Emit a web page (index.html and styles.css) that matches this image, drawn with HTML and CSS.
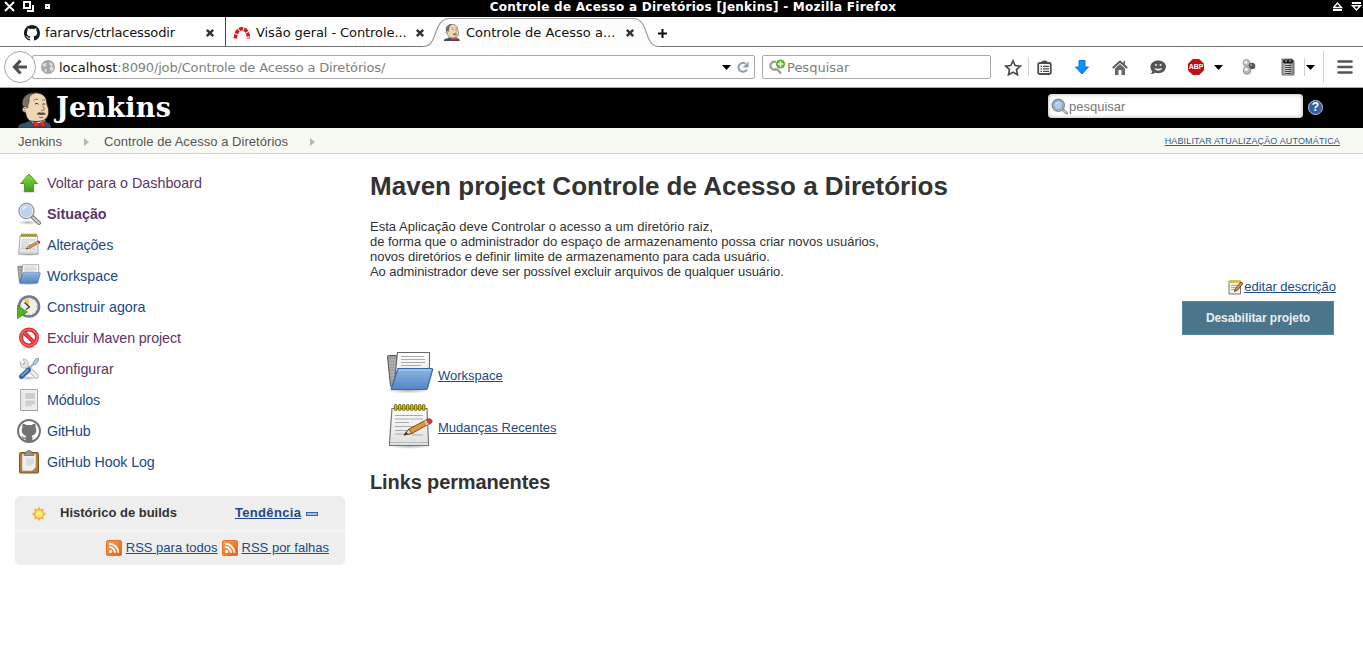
FILE: index.html
```
<!DOCTYPE html>
<html lang="pt-BR">
<head>
<meta charset="utf-8">
<title>Controle de Acesso a Diretórios [Jenkins]</title>
<link rel="stylesheet" href="styles.css">
</head>
<body>
<svg class="defs" width="0" height="0" aria-hidden="true">
  <defs>
    <linearGradient id="gFolder" x1="0" y1="0" x2="0" y2="1"><stop offset="0" stop-color="#8db5e2"/><stop offset="1" stop-color="#5487c4"/></linearGradient>
    <linearGradient id="gPaper" x1="0" y1="0" x2="0" y2="1"><stop offset="0" stop-color="#ffffff"/><stop offset="1" stop-color="#dedede"/></linearGradient>
    <linearGradient id="gGreen" x1="0" y1="0" x2="0" y2="1"><stop offset="0" stop-color="#8fdc4c"/><stop offset="1" stop-color="#3f9c10"/></linearGradient>
    <linearGradient id="gRss" x1="0" y1="0" x2="1" y2="1"><stop offset="0" stop-color="#f5a058"/><stop offset=".5" stop-color="#f08030"/><stop offset="1" stop-color="#d9621c"/></linearGradient>
    <linearGradient id="gBin" x1="0" y1="0" x2="1" y2="0"><stop offset="0" stop-color="#888"/><stop offset=".4" stop-color="#d8d8d8"/><stop offset="1" stop-color="#777"/></linearGradient>
    <radialGradient id="gSun"><stop offset="0" stop-color="#fff6a0"/><stop offset="1" stop-color="#fcd73c"/></radialGradient>
    <radialGradient id="gShade"><stop offset="0" stop-color="#000" stop-opacity=".3"/><stop offset="1" stop-color="#000" stop-opacity="0"/></radialGradient>
  </defs>
  <symbol id="close" viewBox="0 0 10 10"><path d="M1.800 1.800 8.200 8.200M8.200 1.800 1.800 8.200" stroke="#333" stroke-width="2.400"/></symbol>
  <symbol id="caret" viewBox="0 0 9 5"><path d="M0 0h9L4.500 5z" fill="#000"/></symbol>
  <symbol id="octocat" viewBox="0 0 16 16"><path fill="#1b1b1b" d="M8 0C3.58 0 0 3.58 0 8c0 3.54 2.29 6.53 5.47 7.59.4.07.55-.17.55-.38 0-.19-.01-.82-.01-1.49-2.01.37-2.53-.49-2.69-.94-.09-.23-.48-.94-.82-1.13-.28-.15-.68-.52-.01-.53.63-.01 1.08.58 1.23.82.72 1.21 1.87.87 2.33.66.07-.52.28-.87.51-1.07-1.78-.2-3.64-.89-3.64-3.95 0-.87.31-1.59.82-2.15-.08-.2-.36-1.02.08-2.12 0 0 .67-.21 2.2.82.64-.18 1.32-.27 2-.27s1.36.09 2 .27c1.53-1.04 2.2-.82 2.2-.82.44 1.1.16 1.92.08 2.12.51.56.82 1.27.82 2.15 0 3.07-1.87 3.75-3.65 3.95.29.25.54.73.54 1.48 0 1.07-.01 1.93-.01 2.2 0 .21.15.46.55.38A8.01 8.01 0 0 0 16 8c0-4.42-3.58-8-8-8z"/></symbol>
  <symbol id="butler" viewBox="0 0 34 36">
    <path d="M0 36c0-3.500 3-4.500 7-5l5-2.500 9 4 7-2.500c3 .5 4.500 2 5 6z" fill="#34566b" stroke="#1a2c38" stroke-width=".6"/>
    <path d="M12.500 28.500l6 6 9-5-1-3z" fill="#f2f2f2"/>
    <path d="M12 29C8.500 26.500 8 23 7.500 20.500 3.500 20.500 3.500 15.500 6 15 5 8 9 1 17 .8c7-.2 11 3.700 11.600 8.200.3 2 .2 3.500 1.200 5.500 1 2.500 1.200 5 .7 7.500-.8 4-3.500 6.700-8 7.200-3.500.4-7.500.3-10.500-.2z" fill="#efd6b4" stroke="#2a221c" stroke-width=".9"/>
    <path d="M5.500 15.200C2.500 10 5.500 3.500 11 1.700c2-.8 4-.9 6-.7-3.500 1-5.500 3-6 5.500.8 3-1 5-1.500 9.500l-2-1.500z" fill="#77706b" stroke="#2b2622" stroke-width=".5"/>
    <path d="M8.500 16.500q-2.500-.8-2.500 1t2 2" fill="none" stroke="#8a6d52" stroke-width=".7"/>
    <path d="M15.500 8.500c1-1.500 3-1.800 4.500-.8M24 8.500c1-.8 2-.8 3 0" fill="none" stroke="#5f4d3d" stroke-width=".8"/>
    <path d="M17 12q2-1.500 3.500.3M24.500 12.300q1.500-1 2.700 0" fill="none" stroke="#3a3029" stroke-width="1"/>
    <path d="M24.500 13.500q2.500 3.500 1.500 4.500-1.500 1-3 .2" fill="none" stroke="#7a5b40" stroke-width=".8"/>
    <path d="M18.500 22.300c2-2.800 3.700-2.300 5.200-1.600 1.500-.6 3.200-.2 4.300 1.600-2.500.9-6 .9-9.500 0z" fill="#57483e"/>
    <path d="M21 25q2 1.200 4.300.2" fill="none" stroke="#8d4a35" stroke-width=".9"/>
    <path d="M15.500 29.500l5.500 2 5.500-2.500L27.500 35l-5.500-1.200-6 2z" fill="#dd322c" stroke="#7d1712" stroke-width=".6"/><circle cx="21.500" cy="32.500" r="1.600" fill="#b51f1b"/>
  </symbol>
  <symbol id="magnifier" viewBox="0 0 24 24">
    <ellipse cx="11" cy="20.500" rx="10" ry="2.500" fill="url(#gShade)"/>
    <path d="M15 14.500l7 6.500" stroke="#777" stroke-width="4" stroke-linecap="round"/><path d="M16 15.500l6 5.500" stroke="#cfcfcf" stroke-width="2" stroke-linecap="round"/>
    <circle cx="9.500" cy="9" r="7" fill="#b9d3ee" stroke="#8b9499" stroke-width="2.400"/><circle cx="9.500" cy="9" r="6.300" fill="none" stroke="#e7edf3" stroke-width="1.300"/><path d="M5 9c0-4 4-6 7-4-3 0-5 2-7 4z" fill="#e8f3ff"/>
  </symbol>
  <symbol id="lens" viewBox="0 0 17 17">
    <path d="M11 11l4.500 4" stroke="#888" stroke-width="3" stroke-linecap="round"/><path d="M12 12l3.500 3" stroke="#ccc" stroke-width="1.300"/>
    <circle cx="7.300" cy="7.200" r="6" fill="#fff" stroke="#8a8d88" stroke-width="1.500"/><circle cx="7.300" cy="7.200" r="4.600" fill="#a9ccf2" stroke="#5b86b8" stroke-width=".9"/><path d="M4.500 7c0-2.500 2.500-3.500 4.500-2.500-2 0-3.500 1.200-4.500 2.500z" fill="#e8f3ff"/>
  </symbol>
  <symbol id="notepad" viewBox="0 0 48 48">
    <ellipse cx="24" cy="43" rx="22" ry="3" fill="url(#gShade)"/>
    <path d="M6 5.500h35l1.500 34v3h-39v-3z" fill="url(#gPaper)" stroke="#777" stroke-width="1.200"/><path d="M4 39.500h38" stroke="#bbb"/>
    <path d="M9 12.500h28M9 16h28M9 19.500h14M9 23.500h24M9 27.500h18M9 31h12M26 32h11" stroke="#aaa" stroke-width="1"/>
    <g fill="#dbc51c" stroke="#645a05" stroke-width=".9"><rect x="8.300" y="1.500" width="2.700" height="6" rx="1.300"/><rect x="12.300" y="1.500" width="2.700" height="6" rx="1.300"/><rect x="16.300" y="1.500" width="2.700" height="6" rx="1.300"/><rect x="20.300" y="1.500" width="2.700" height="6" rx="1.300"/><rect x="24.300" y="1.500" width="2.700" height="6" rx="1.300"/><rect x="28.300" y="1.500" width="2.700" height="6" rx="1.300"/><rect x="32.300" y="1.500" width="2.700" height="6" rx="1.300"/><rect x="36.300" y="1.500" width="2.700" height="6" rx="1.300"/></g>
    <path d="M18 32l5-6 18-9.500 2.500 4L26 30.500z" fill="#d9973c" stroke="#78501a" stroke-width="1"/><path d="M18 32l5-6 2.500 4.500z" fill="#f0d9ae" stroke="#5b4320" stroke-width=".8"/><path d="M18 32l2.500-3 1.200 2z" fill="#222"/>
    <path d="M40 17l2-1c2-1 5 1 4 3.500l-3 2z" fill="#dc3838" stroke="#8a1d1d" stroke-width=".6"/><path d="M38.300 17.900l2.400 4.300 2-1-2.500-4.300z" fill="#ccc"/>
  </symbol>
  <symbol id="folder" viewBox="0 0 48 48">
    <ellipse cx="22" cy="39.500" rx="22" ry="3" fill="url(#gShade)"/>
    <path d="M1.500 5.500q0-1 1-1h8l4 29-7 4q-3-1-3.200-4z" fill="#9c9c9c" stroke="#555"/><path d="M3 9h9M3 12h9M3 15h9M4 18h9M4 21h9M4 24h9M5 27h9" stroke="#c9c9c9" stroke-width=".8"/>
    <path d="M11.500 1.500h32v14l-3 10H16L8 35z" fill="url(#gPaper)" stroke="#666" stroke-width="1.100"/><path d="M15 5.500h23M15 8.500h24M15 11.500h24M15 14.500h20" stroke="#aaa"/>
    <path d="M12 17.500h33.500q1.500 0 1 1.500l-5 18q-.5 1.500-2 1.500H6.500q-2 0-1-1.500z" fill="url(#gFolder)" stroke="#3567a5" stroke-width="1.200"/><path d="M12.700 19h32.300" stroke="#b8d4f2" stroke-width=".8"/>
  </symbol>
  <symbol id="rss" viewBox="0 0 16 16"><rect width="16" height="16" rx="2.500" fill="url(#gRss)"/><rect x=".5" y=".5" width="15" height="15" rx="2" fill="none" stroke="#e37328" /><circle cx="4.600" cy="11.400" r="1.600" fill="#fff"/><path d="M3.200 7a5.800 5.800 0 0 1 5.800 5.800M3.200 3.700a9.100 9.100 0 0 1 9.100 9.100" fill="none" stroke="#fff" stroke-width="2"/></symbol>
</svg>

<header class="titlebar">
  <svg class="wm-left" width="56" height="13" viewBox="0 0 56 13"><path d="M5 2l9 9M14 2l-9 9" stroke="#fff" stroke-width="2"/><path d="M24 2h6v6h-6z" fill="none" stroke="#fff" stroke-width="2"/><path d="M33 5v6h-6" fill="none" stroke="#fff" stroke-width="2"/><path d="M46 5h3v3h-3z" fill="none" stroke="#fff" stroke-width="2"/></svg>
  <span class="wm-title">Controle de Acesso a Diretórios [Jenkins] - Mozilla Firefox</span>
  <svg class="wm-right" width="30" height="13" viewBox="0 0 30 13"><path d="M.5 7.500h8L4.500 3z" fill="none" stroke="#fff" stroke-width="1.400"/><path d="M0 10h9M19 3h9" stroke="#fff" stroke-width="2"/><path d="M19.500 5.700h8l-4 4.200z" fill="none" stroke="#fff" stroke-width="1.400"/></svg>
</header>

<nav class="tabs">
  <div class="tab tab-first">
    <svg width="16" height="16"><use href="#octocat"/></svg>
    <span class="tab-label">fararvs/ctrlacessodir</span>
    <svg width="10" height="10"><use href="#close"/></svg>
  </div>
  <div class="tab tab-second">
    <svg width="18" height="16" viewBox="0 0 18 16"><path d="M2.500 13.500C2.500.5 15.500.5 15.500 13.500" fill="none" stroke="#d51a1e" stroke-width="3.600" stroke-dasharray="4 1"/></svg>
    <span class="tab-label">Visão geral - Controle...</span>
    <svg width="10" height="10"><use href="#close"/></svg>
  </div>
  <div class="tab tab-active">
    <svg class="tab-shape" width="238" height="30" viewBox="0 0 238 30"><path d="M0 29.500C16 29.500 9 1.500 27 1.500H210C227 1.500 220 29.500 236 29.500V30H0z" fill="#fcfcfc"/><path d="M0 29.500C16 29.500 9 1.500 27 1.500H210C227 1.500 220 29.500 236 29.500" fill="none" stroke="#999" stroke-width="1.200"/></svg>
    <svg class="over" width="16" height="17" viewBox="0 0 34 36"><use href="#butler"/></svg>
    <span class="tab-label over">Controle de Acesso a...</span>
    <svg class="over" width="10" height="10"><use href="#close"/></svg>
  </div>
  <svg class="new-tab" width="9" height="9" viewBox="0 0 9 9"><path d="M4.500 0v9M0 4.500h9" stroke="#111" stroke-width="2"/></svg>
</nav>

<div class="toolbar">
  <div class="back"><svg width="16" height="16" viewBox="0 0 16 16"><path d="M8.500 1.500 2.500 8l6 6.500M3 8h12" fill="none" stroke="#4f4f4f" stroke-width="3.200"/></svg></div>
  <div class="urlbar">
    <svg width="14" height="14" viewBox="0 0 14 14"><circle cx="7" cy="7" r="7" fill="#a6a6a6"/><path d="M1 5l2.500-2 2.500.5-1 2.500-2 1zM8 2l4 2-1.500 2.500L13 8l-2.500 4-2-3.500 1-2zM4 8.500l2 1-.5 3-2-1z" fill="#dedede"/></svg>
    <span class="url"><b>localhost</b>:8090/job/Controle de Acesso a Diretórios/</span>
    <svg class="drop" width="9" height="5"><use href="#caret"/></svg>
    <svg width="12" height="12" viewBox="0 0 12 12"><path d="M10 8.500A4.500 4.500 0 1 1 8.500 2.500" fill="none" stroke="#8f9cac" stroke-width="2"/><path d="M11.500.5v6h-6z" fill="#8f9cac"/></svg>
  </div>
  <div class="ff-search">
    <svg width="18" height="17" viewBox="0 0 18 17"><path d="M8 3A4 4 0 1 0 8.500 10M8.500 9.500l4.500 5" fill="none" stroke="#999" stroke-width="2.200"/><circle cx="12.500" cy="5" r="4.600" fill="#5eb91e"/><path d="M12.500 2.300v5.400M9.800 5h5.400" stroke="#fff" stroke-width="1.500"/></svg>
    <span>Pesquisar</span>
  </div>
  <div class="tools">
    <svg class="t-star" width="18" height="17" viewBox="0 0 18 17"><path d="M9 1.800l2.200 4.700 5.100.6-3.800 3.500 1 5.100L9 13.200l-4.500 2.500 1-5.100L1.700 7.100l5.100-.6z" fill="none" stroke="#4c4c4c" stroke-width="1.700"/></svg>
    <i class="sep"></i>
    <svg class="t-list" width="15" height="15" viewBox="0 0 15 15"><rect x="1.200" y="3" width="12.600" height="11" rx="1.500" fill="none" stroke="#4d4d4d" stroke-width="1.800"/><path d="M4 3.500q0-3 3.500-3t3.500 3z" fill="#4d4d4d"/><path d="M3.500 6.300H5M6 6.300h6M3.500 8.800H5M6 8.800h6M3.500 11.300H5M6 11.300h6" stroke="#4d4d4d" stroke-width="1.300"/></svg>
    <svg class="t-down" width="14" height="15" viewBox="0 0 14 15"><path d="M4 .5h6v6.500h3.500L7 14 .5 7H4z" fill="#1390ff" stroke="#0b74d6"/></svg>
    <svg class="t-home" width="16" height="15" viewBox="0 0 16 15"><path d="M.8 8 8 1.500 15.200 8" fill="none" stroke="#555" stroke-width="1.800"/><path d="M3 8.500 8 4l5 4.500V15H9.500v-5h-3v5H3z" fill="#666"/><path d="M11.500 1H13v4l-1.500-1.500z" fill="#555"/></svg>
    <svg class="t-chat" width="16" height="15" viewBox="0 0 16 15"><path d="M8.200.5C12.500.5 16 3 16 6.800s-3.500 6.400-7.800 6.400q-1.600 0-3-.4-2 1.500-5 1.200 1.800-1 2.100-2.600C1 10.200.4 8.600.4 6.800.4 3 4 .5 8.200.5z" fill="#555"/><circle cx="6" cy="5" r="1" fill="#eee"/><circle cx="10.500" cy="5" r="1" fill="#eee"/><path d="M4 8q4 1.500 8.500 0-1.500 2.800-4.200 2.800T4 8z" fill="#eee"/></svg>
    <span class="abp">ABP</span>
    <svg class="t-caret1" width="9" height="5"><use href="#caret"/></svg>
    <svg class="t-balls" width="14" height="16" viewBox="0 0 14 16"><circle cx="4.500" cy="4" r="3.400" fill="#bbb" stroke="#999"/><circle cx="10" cy="7" r="3.300" fill="#555"/><circle cx="5" cy="11.500" r="3.700" fill="#bbb" stroke="#888"/><circle cx="3.800" cy="3.200" r="1.500" fill="#f4f4f4"/><circle cx="4.200" cy="10.200" r="1.700" fill="#f4f4f4"/><circle cx="9" cy="6" r="1" fill="#aaa"/></svg>
    <svg class="t-bin" width="14" height="18" viewBox="0 0 14 18"><path d="M1 1h10.500L13 3v14H1z" fill="url(#gBin)" stroke="#777"/><rect x="2" y="1.500" width="10" height="4" rx="2" fill="#171717"/><path d="M4 3h2M8 3h2" stroke="#ccc"/><path d="M4 7.500h6M4 9.500h6M4 11.500h6M4 13.500h6M4 15.500h6" stroke="#444"/></svg>
    <i class="sep sep-b"></i>
    <svg class="t-caret2" width="9" height="5"><use href="#caret"/></svg>
    <i class="sep sep-c"></i>
    <svg class="t-menu" width="16" height="14" viewBox="0 0 16 14"><path d="M1.500 1.500h13M1.500 7h13M1.500 12.500h13" stroke="#555" stroke-width="2.600" stroke-linecap="round"/></svg>
  </div>
</div>

<header class="jenkins-header">
  <svg class="logo-face" width="34" height="36"><use href="#butler"/></svg>
  <span class="logo-name">Jenkins</span>
  <div class="j-search"><svg width="17" height="17"><use href="#lens"/></svg><span>pesquisar</span></div>
  <span class="help">?</span>
</header>

<div class="crumbs">
  <span class="crumb-a">Jenkins</span><i class="arrow"></i><span class="crumb-b">Controle de Acesso a Diretórios</span><i class="arrow"></i>
  <a class="auto" href="#">HABILITAR ATUALIZAÇÃO AUTOMÁTICA</a>
</div>

<div class="page">
  <aside class="side">
    <ul class="tasks">
      <li><svg width="24" height="24" viewBox="0 0 24 24"><ellipse cx="12" cy="20.500" rx="9" ry="2" fill="url(#gShade)"/><path d="M12 3l8.500 9.500H16.500v8h-9v-8H3.500z" fill="url(#gGreen)" stroke="#4c9b25"/></svg><a class="visited" href="#">Voltar para o Dashboard</a></li>
      <li><svg width="24" height="24"><use href="#magnifier"/></svg><a class="visited current" href="#">Situação</a></li>
      <li><svg width="24" height="24"><use href="#notepad"/></svg><a class="snug" href="#">Alterações</a></li>
      <li><svg width="24" height="24"><use href="#folder"/></svg><a href="#">Workspace</a></li>
      <li><svg width="24" height="24" viewBox="0 0 24 24"><circle cx="12" cy="11.500" r="10" fill="#f1f1ec" stroke="#77778e" stroke-width="2.600"/><circle cx="12" cy="11.500" r="7.800" fill="none" stroke="#999" stroke-width=".8" stroke-dasharray="1 3"/><path d="M12 11.500 7 5l5-1z" fill="#e3c94e"/><path d="M7.500 7.500 12.500 12 9 14.500" fill="none" stroke="#333" stroke-width="1.200"/><path d="M.5 10.500 10.500 17 .5 23.500z" fill="#4fb51f" stroke="#38901a" stroke-width=".8"/></svg><a href="#">Construir agora</a></li>
      <li><svg width="24" height="24" viewBox="0 0 24 24"><ellipse cx="12" cy="21.500" rx="9" ry="1.500" fill="url(#gShade)"/><circle cx="12" cy="11.500" r="8" fill="#fff" stroke="#cf292c" stroke-width="4"/><path d="M6.500 6l11 11" stroke="#cf292c" stroke-width="4"/><circle cx="12" cy="11.500" r="8.200" fill="none" stroke="#ea6565" stroke-width="1.700"/><path d="M6.500 6l11 11" stroke="#e24c4c" stroke-width="2"/></svg><a class="visited snug" href="#">Excluir Maven project</a></li>
      <li><svg width="24" height="24" viewBox="0 0 24 24"><ellipse cx="11" cy="21" rx="10" ry="2" fill="url(#gShade)"/><path d="M8 8l11.500 11.500" stroke="#aaa" stroke-width="4.600" stroke-linecap="round"/><path d="M8 8l11.500 11.500" stroke="#ececec" stroke-width="3.200" stroke-linecap="round"/><path d="M6 2c4 0 6 3 5 7-2 3-6 2.500-7.500 0l-.3-4L6 7.500l2-1z" fill="#e6e6e6" stroke="#aaa" stroke-width=".8"/><path d="M11.500 12 18 5.500" stroke="#9aa9b5" stroke-width="2"/><path d="M16 6l3-4.500h2.500V4L18 8z" fill="#a8c7e5" stroke="#7895ad" stroke-width=".8"/><path d="M4.500 19.500l7-6.500" stroke="#2f609e" stroke-width="5" stroke-linecap="round"/><path d="M5 18.500l6-5.500" stroke="#6b9ed8" stroke-width="2" stroke-linecap="round"/></svg><a class="visited" href="#">Configurar</a></li>
      <li><svg width="24" height="24" viewBox="0 0 24 24"><path d="M3.500 1.500h17v21h-17z" fill="#eee" stroke="#aaa"/><path d="M4 22.500h17" stroke="#999"/><path d="M8 5h10v6H8zM8 12.500h10v4h-3v2H8z" fill="#d2d2d2"/><path d="M5.500 4v17" stroke="#ddd"/><path d="M9 6.500h8M9 8.500h8M9 14h8" stroke="#c4c4c4" stroke-width=".8"/></svg><a class="snug" href="#">Módulos</a></li>
      <li><svg width="24" height="24" viewBox="0 0 24 24"><circle cx="12" cy="12" r="11" fill="#fff" stroke="#737373" stroke-width="1.900"/><path d="M5.700 4.800q2 0 3.600 1.200h5.400q1.600-1.200 3.600-1.200.6 2 .2 3.500 1 1.300.8 3.500-.3 4-4.500 5 .6.600.7 2v3.500q-3.500 1.200-7 0v-2.500q-3.500.8-4-2.800 1.500.5 2 1.200 1 1 2 .4.100-1.200.8-1.800-4.200-.8-4.600-5-.2-2 .8-3.500-.5-1.500.2-3.500z" fill="#737373"/></svg><a class="snug" href="#">GitHub</a></li>
      <li><svg width="24" height="24" viewBox="0 0 24 24"><rect x="2.500" y="2.500" width="19" height="20.500" rx="1" fill="#ba772d" stroke="#8e5510"/><path d="M5 4h14v17H5z" fill="#f0f0f0" stroke="#999" stroke-width=".6"/><path d="M9 9h8M9 11h8M9 13h8M9 15h6" stroke="#c9c9c9"/><path d="M15 21l4-4v4z" fill="#888"/><path d="M7 5.500q0-2.500 2-2.500 0-2.500 3-2.500t3 2.500q2 0 2 2.500z" fill="#929790" stroke="#62675e" stroke-width=".7"/></svg><a class="snug" href="#">GitHub Hook Log</a></li>
    </ul>
    <section class="history">
      <div class="history-top">
        <svg width="16" height="16" viewBox="0 0 16 16"><path d="M8 .5l1.500 3 3.500-1-1 3.400 3.500 2.100-3.500 2.100 1 3.400-3.500-1L8 15.500l-1.500-3-3.500 1 1-3.400L.5 8 4 5.900 3 2.500l3.500 1z" fill="#f5a952"/><circle cx="8" cy="8" r="4.500" fill="url(#gSun)" stroke="#efa23c" stroke-width=".8"/></svg>
        <strong>Histórico de builds</strong>
        <a class="trend" href="#">Tendência</a><i class="dash"></i>
      </div>
      <div class="history-feeds">
        <svg width="16" height="16"><use href="#rss"/></svg><a href="#">RSS para todos</a>
        <svg width="16" height="16"><use href="#rss"/></svg><a href="#">RSS por falhas</a>
      </div>
    </section>
  </aside>
  <main class="main">
    <h1>Maven project Controle de Acesso a Diretórios</h1>
    <p class="desc"><span class="d1">Esta Aplicação deve Controlar o acesso a um diretório raiz,</span><br><span class="d2">de forma que o administrador do espaço de armazenamento possa criar novos usuários,</span><br><span class="d3">novos diretórios e definir limite de armazenamento para cada usuário.</span><br><span class="d4">Ao administrador deve ser possível excluir arquivos de qualquer usuário.</span></p>
    <div class="edit"><svg width="16" height="16" viewBox="0 0 16 16"><path d="M1 2h11.500v13H1z" fill="#eee" stroke="#777"/><path d="M1 1.500h12v2.500H1z" fill="#d9c422"/><path d="M3 6.500h7M3 8.500h6M3 10.500h4" stroke="#aaa"/><path d="M6.500 12.500l1-3 5.500-6.500 2 1.500L9.500 11z" fill="#d89b45" stroke="#57380f" stroke-width=".9"/></svg><a href="#">editar descrição</a></div>
    <div class="actions"><button type="button">Desabilitar projeto</button></div>
    <div class="links">
      <div><svg width="48" height="48"><use href="#folder"/></svg><a href="#">Workspace</a></div>
      <div><svg width="48" height="48"><use href="#notepad"/></svg><a href="#">Mudanças Recentes</a></div>
    </div>
    <h2>Links permanentes</h2>
  </main>
</div>
</body>
</html>
```
FILE: styles.css
```
* { box-sizing: border-box; }
html, body { margin: 0; }
body { width: 1363px; height: 652px; overflow: hidden; background: #fff; color: #333; font: 13px/15px "Liberation Sans", Arial, sans-serif; }
svg { display: block; flex: none; }
.defs { position: absolute; }
a { color: #204a87; text-decoration: underline; white-space: nowrap; }
span, strong { white-space: nowrap; }

.titlebar { height: 17px; background: #000; display: flex; align-items: flex-start; color: #fff; font: bold 12px/14px "DejaVu Sans", sans-serif; }
.wm-title { flex: 1; text-align: center; padding-right: 3px; letter-spacing: .27px; }

.tabs { height: 30px; display: flex; align-items: stretch; border-bottom: 1px solid #777; font: 13px/16px "DejaVu Sans", sans-serif; color: #111; }
.tab { display: flex; align-items: center; padding-top: 2px; }
.tab-label { flex: 1; padding-left: 5px; }
.tab-first { width: 226px; padding-left: 24px; padding-right: 10px; border-right: 1px solid #444; }
.tab-first .tab-label { letter-spacing: -.15px; }
.tab-second { width: 204px; padding-left: 7px; padding-right: 5px; }
.tab-second .tab-label { letter-spacing: -.08px; }
.tab-active { width: 209px; padding-left: 14px; padding-right: 4px; position: relative; }
.tab-active .tab-label { padding-left: 6px; }
.tab-shape { position: absolute; left: -7px; top: 0; }
.over { position: relative; }
.new-tab { margin: 12px 0 0 19px; }

.toolbar { height: 41px; display: flex; align-items: center; border-bottom: 1px solid #aaa; padding-left: 4px; font: 13px/16px "DejaVu Sans", sans-serif; color: #808080; }
.back { width: 32px; height: 32px; border: 1px solid #9da6b0; border-radius: 50%; display: flex; align-items: center; justify-content: center; background: #fff; z-index: 1; }
.urlbar { width: 723px; height: 24px; margin-left: -4px; border: 1px solid #aaa; border-radius: 2px; display: flex; align-items: center; padding: 0 5px 0 8px; }
.url { flex: 1; padding: 2px 0 0 4px; letter-spacing: -.17px; }
.url b { font-weight: normal; color: #111; letter-spacing: 0; }
.drop { margin-right: 6px; }
.ff-search { width: 229px; height: 24px; margin-left: 7px; border: 1px solid #aaa; border-radius: 2px; display: flex; align-items: center; padding-left: 5px; }
.ff-search span { padding: 2px 0 0 1px; }
.tools { display: flex; align-items: center; height: 100%; padding-left: 13px; }
.sep { width: 1px; height: 18px; background: #ccd2d9; margin-left: 6px; }
.t-list { margin-left: 8px; } .t-down { margin-left: 23px; } .t-home { margin-left: 23px; } .t-chat { margin-left: 22px; }
.abp { width: 16px; height: 16px; margin-left: 22px; background: #c70d11; clip-path: polygon(30% 0,70% 0,100% 30%,100% 70%,70% 100%,30% 100%,0 70%,0 30%); color: #fff; font: bold 7px/16px "Liberation Sans", sans-serif; letter-spacing: -.1px; text-align: center; }
.t-caret1 { margin-left: 10px; } .t-balls { margin-left: 19px; } .t-bin { margin-left: 25px; }
.sep-b { margin-left: 9px; } .t-caret2 { margin-left: 1px; }
.sep-c { height: 32px; margin-left: 8px; } .t-menu { margin-left: 13px; }

.jenkins-header { height: 40px; background: #000; display: flex; align-items: center; }
.logo-face { align-self: flex-end; margin-left: 18px; }
.logo-name { flex: 1; padding: 0 0 1px 4px; color: #fff; font: bold 27px/30px "DejaVu Serif", Georgia, serif; letter-spacing: .25px; }
.j-search { width: 255px; height: 24px; margin-bottom: 4px; border-radius: 4px; background: #fff; box-shadow: inset 0 0 4px #aaa; display: flex; align-items: center; padding-left: 3px; color: #777; }
.j-search span { padding-left: 1px; }
.help { width: 15px; height: 15px; margin: 0 40px 1px 5px; border-radius: 50%; background: #31619f; border: 1px solid #b9cbe2; color: #fff; text-align: center; font: bold 12px/13px "Liberation Sans", sans-serif; }

.crumbs { height: 26px; background: #f6faf2; border-bottom: 1px solid #d3d7cf; display: flex; align-items: center; padding: 2px 23px 0 18px; color: #555; }
.arrow { border-left: 5px solid #b5b5b5; border-top: 4px solid transparent; border-bottom: 4px solid transparent; margin-left: 21.5px; }
.crumb-b { margin-left: 15.5px; letter-spacing: .04px; }
.auto { margin-left: auto; font-size: 9px; letter-spacing: .15px; color: #34578f; }

.page { display: flex; }
.side { width: 370px; padding: 14px 0 0 15px; }
.tasks { list-style: none; margin: 0; padding: 0 0 0 2px; }
.tasks li { height: 31px; display: flex; align-items: center; gap: 6px; }
.tasks svg { margin-bottom: 2px; }
.tasks a { text-decoration: none; font-size: 14.3px; }
.tasks .visited { color: #5c3566; }
.tasks .current { font-weight: bold; }
.tasks .snug { letter-spacing: -.14px; }
.history { width: 330px; height: 69px; margin-top: 18px; background: #eee; border-radius: 5px; }
.history-top { height: 36px; border-bottom: 2px solid #f4f4f4; display: flex; align-items: center; padding: 0 0 1px 16px; }
.history-top svg { margin-top: 3px; }
.history-top strong { width: 175px; margin-left: 13px; }
.trend { font-weight: bold; letter-spacing: .32px; }
.dash { width: 12px; height: 4px; margin: 3px 0 0 5px; border: 1px solid #3465a4; background: #a4c2e5; }
.history-feeds { height: 31px; display: flex; align-items: center; justify-content: flex-end; gap: 4px; padding-right: 16px; }

.main { width: 966px; padding-top: 17px; }
h1 { margin: 0; font: bold 26px/30px "Liberation Sans", Arial, sans-serif; letter-spacing: .02px; white-space: nowrap; }
.desc { margin: 18px 0 0; white-space: nowrap; }
.d1 { letter-spacing: .03px; }
.d2 { letter-spacing: -.025px; }
.d3 { letter-spacing: -.04px; }
.d4 { letter-spacing: -.075px; }
.edit { display: flex; justify-content: flex-end; align-items: center; height: 16px; }
.edit a { padding-bottom: 1px; }
.actions { display: flex; justify-content: flex-end; padding: 6px 2px 0 0; }
button { width: 152px; height: 34px; border: 1px solid #5289a0; background: #4b758b; color: #eee; font: bold 12px "Liberation Sans", Arial, sans-serif; padding: 0; letter-spacing: -.06px; }
.links { display: flex; flex-direction: column; gap: 4px; padding: 16px 0 0 16px; }
.links div { display: flex; align-items: center; gap: 4px; }
h2 { margin: 20px 0 0; font: bold 20px/23px "Liberation Sans", Arial, sans-serif; letter-spacing: -.12px; }
```
